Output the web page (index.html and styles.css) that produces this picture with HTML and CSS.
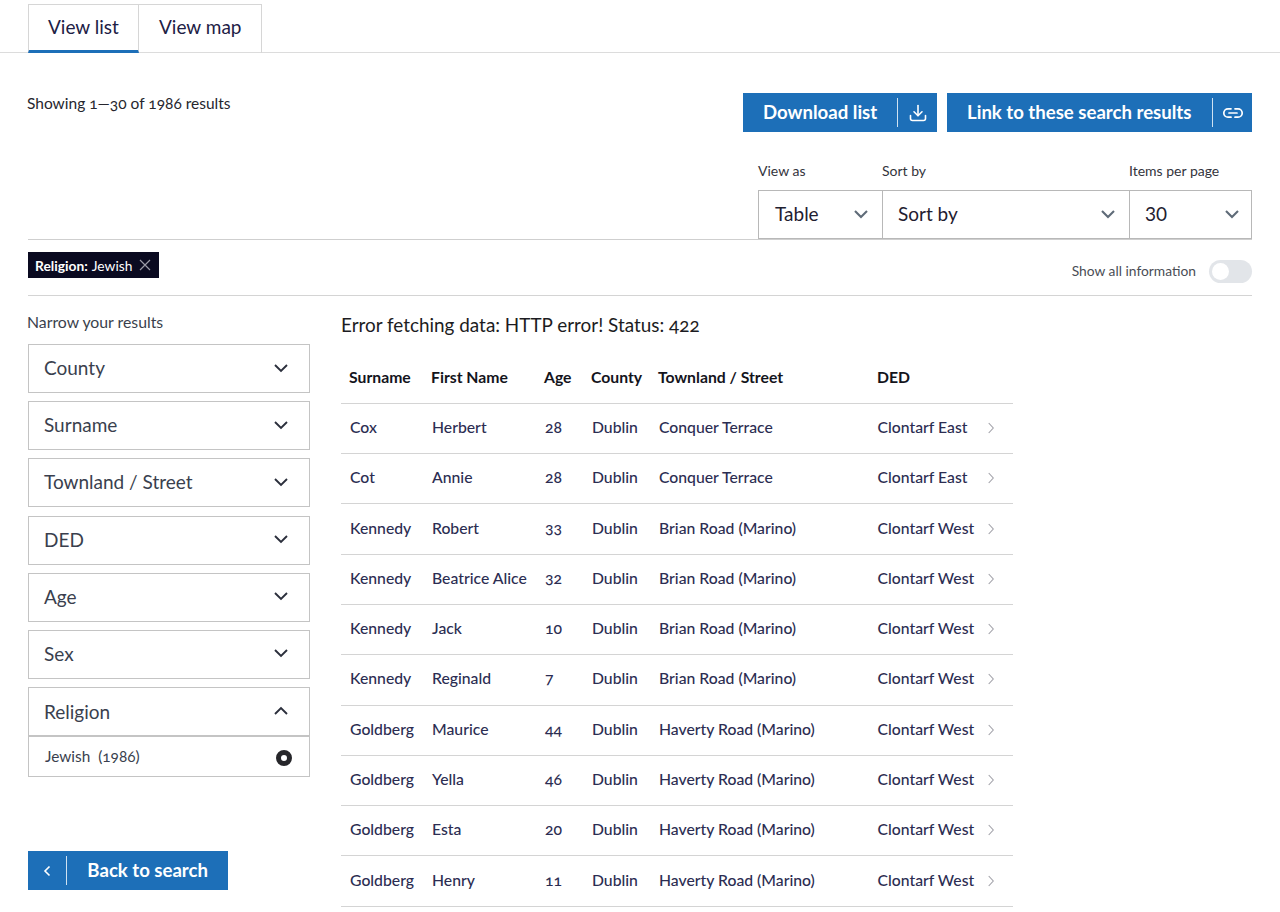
FILE: index.html
```html
<!DOCTYPE html>
<html>
<head>
  <title>Search results</title>
  <link rel="stylesheet" href="styles.css">
</head>
<body>

  <nav class="tabs">
    <a class="tab active">View list</a>
    <a class="tab">View map</a>
  </nav>

  <div class="page">
    <div class="toolbar">
      <p class="showing">Showing 1—30 of 1986 results</p>
      <div class="toolbar-right">
        <div class="actions">
          <a class="btn download">
            <span class="btn-label">Download list</span>
            <span class="btn-icon">
              <svg width="20" height="20" viewBox="0 0 20 20" fill="none" stroke="#fff" stroke-width="1.6" stroke-linecap="round" stroke-linejoin="round"><path d="M10 2.5v10"/><path d="M6 8.8l4 3.9 4-3.9"/><path d="M2.5 12.5v3a2 2 0 0 0 2 2h11a2 2 0 0 0 2-2v-3"/></svg>
            </span>
          </a>
          <a class="btn link-results">
            <span class="btn-label">Link to these search results</span>
            <span class="btn-icon">
              <svg width="22" height="20" viewBox="0 0 22 20" fill="none" stroke="#fff" stroke-width="1.7" stroke-linecap="round"><path d="M9 5.8H6a4.2 4.2 0 0 0 0 8.4h3"/><path d="M13 5.8h3a4.2 4.2 0 0 1 0 8.4h-3"/><path d="M7 10h8"/></svg>
            </span>
          </a>
        </div>
        <div class="selects">
          <div class="select-group view-as">
            <label>View as</label>
            <div class="select">Table <svg class="chev grey" viewBox="0 0 16 10"><path d="M2 2l6 6 6-6"/></svg></div>
          </div>
          <div class="select-group sort-by">
            <label>Sort by</label>
            <div class="select">Sort by <svg class="chev grey" viewBox="0 0 16 10"><path d="M2 2l6 6 6-6"/></svg></div>
          </div>
          <div class="select-group per-page">
            <label>Items per page</label>
            <div class="select">30 <svg class="chev grey" viewBox="0 0 16 10"><path d="M2 2l6 6 6-6"/></svg></div>
          </div>
        </div>
      </div>
    </div>

    <div class="chips-bar">
      <span class="chip"><b>Religion:</b> Jewish
        <svg width="12" height="12" viewBox="0 0 12 12" fill="none" stroke="#9a9aa6" stroke-width="1.2"><path d="M1 1l10 10M11 1L1 11"/></svg>
      </span>
      <div class="show-all">
        <span>Show all information</span>
        <span class="toggle"><span class="knob"></span></span>
      </div>
    </div>

    <div class="content">
      <aside class="sidebar">
        <p class="narrow">Narrow your results</p>
        <div class="filter">County <svg class="chev" viewBox="0 0 16 10"><path d="M2 2l6 6 6-6"/></svg></div>
        <div class="filter">Surname <svg class="chev" viewBox="0 0 16 10"><path d="M2 2l6 6 6-6"/></svg></div>
        <div class="filter">Townland / Street <svg class="chev" viewBox="0 0 16 10"><path d="M2 2l6 6 6-6"/></svg></div>
        <div class="filter">DED <svg class="chev" viewBox="0 0 16 10"><path d="M2 2l6 6 6-6"/></svg></div>
        <div class="filter">Age <svg class="chev" viewBox="0 0 16 10"><path d="M2 2l6 6 6-6"/></svg></div>
        <div class="filter">Sex <svg class="chev" viewBox="0 0 16 10"><path d="M2 2l6 6 6-6"/></svg></div>
        <div class="filter open">
          <div class="filter-head">Religion <svg class="chev" viewBox="0 0 16 10"><path d="M2 8l6-6 6 6"/></svg></div>
          <div class="filter-option"><span>Jewish&nbsp; (1986)</span><span class="radio"></span></div>
        </div>
        <a class="btn back">
          <span class="back-icon">
            <svg width="8" height="12" viewBox="0 0 8 12" fill="none" stroke="#fff" stroke-width="1.6"><path d="M6.5 1.5L2 6l4.5 4.5"/></svg>
          </span>
          <span class="btn-label">Back to search</span>
        </a>
      </aside>

      <main class="results">
        <p class="error">Error fetching data: HTTP error! Status: 422</p>
        <table class="results-table">
          <colgroup>
            <col class="c1"><col class="c2"><col class="c3"><col class="c4"><col class="c5"><col class="c6">
          </colgroup>
          <thead>
            <tr><th>Surname</th><th>First Name</th><th>Age</th><th>County</th><th>Townland / Street</th><th>DED</th></tr>
          </thead>
          <tbody id="rows"></tbody>
        </table>
      </main>
    </div>
  </div>

  <script>
    const people = [
      ["Cox", "Herbert", 28, "Conquer Terrace", "Clontarf East"],
      ["Cot", "Annie", 28, "Conquer Terrace", "Clontarf East"],
      ["Kennedy", "Robert", 33, "Brian Road (Marino)", "Clontarf West"],
      ["Kennedy", "Beatrice Alice", 32, "Brian Road (Marino)", "Clontarf West"],
      ["Kennedy", "Jack", 10, "Brian Road (Marino)", "Clontarf West"],
      ["Kennedy", "Reginald", 7, "Brian Road (Marino)", "Clontarf West"],
      ["Goldberg", "Maurice", 44, "Haverty Road (Marino)", "Clontarf West"],
      ["Goldberg", "Yella", 46, "Haverty Road (Marino)", "Clontarf West"],
      ["Goldberg", "Esta", 20, "Haverty Road (Marino)", "Clontarf West"],
      ["Goldberg", "Henry", 11, "Haverty Road (Marino)", "Clontarf West"]
    ];

    const arrow = '<svg width="6" height="12" viewBox="0 0 6 12" fill="none" stroke="#a0a0a8" stroke-width="1.1"><path d="M.7 1l4.6 5-4.6 5"/></svg>';

    document.getElementById("rows").innerHTML = people.map(p =>
      `<tr><td>${p[0]}</td><td>${p[1]}</td><td>${p[2]}</td><td>Dublin</td><td>${p[3]}</td><td><div class="ded-cell"><span>${p[4]}</span>${arrow}</div></td></tr>`
    ).join("");
  </script>

</body>
</html>
```

FILE: styles.css
```css
* {
  box-sizing: border-box;
}
body {
  margin: 0;
  font-family: Lato, "Open Sans", sans-serif;
  font-variant-numeric: oldstyle-nums;
  color: #1f2030;
  background: #fff;
}
p {
  margin: 0;
}

/* tabs */
.tabs {
  display: flex;
  height: 53px;
  padding: 4px 0 0 28px;
  border-bottom: 1px solid #dcdcdc;
}
.tab {
  height: 49px;
  padding: 10px 20px 0 20px;
  font-size: 19px;
  line-height: 24px;
  color: #1d2045;
  white-space: nowrap;
  border: 1px solid #d6d6d6;
  border-bottom: none;
}
.tab + .tab {
  border-left: none;
}
.tab.active {
  width: 111px;
  padding-left: 19px;
  border-bottom: 3px solid #1d6fb8;
}

.page {
  padding: 0 28px;
}

/* top toolbar */
.toolbar {
  display: flex;
  justify-content: space-between;
  height: 187px;
  border-bottom: 1px solid #cfcfcf;
}
.showing {
  margin-top: 40px;
  margin-left: -1px;
  font-size: 15.5px;
  line-height: 20px;
  color: #26262e;
}
.toolbar-right {
  display: flex;
  flex-direction: column;
  align-items: flex-end;
  padding-top: 40px;
}
.actions {
  display: flex;
  gap: 10px;
}
.btn {
  display: flex;
  align-items: center;
  height: 39px;
  background: #1d6fb8;
  color: #fff;
  font-size: 18.6px;
  font-weight: 700;
  white-space: nowrap;
}
.btn.download {
  width: 194px;
}
.btn.link-results {
  width: 305px;
}
.btn-label {
  padding: 0 20px 2px;
}
.btn-icon {
  display: flex;
  align-items: center;
  justify-content: center;
  width: 40px;
  height: 29px;
  margin-left: auto;
  border-left: 1px solid #cfe2f2;
}
.selects {
  display: flex;
  margin-top: 29px;
}
.select-group label {
  display: block;
  height: 29px;
  font-size: 14px;
  line-height: 20px;
  color: #33343c;
}
.view-as {
  width: 124px;
}
.sort-by {
  width: 247px;
}
.per-page {
  width: 123px;
}
.select {
  display: flex;
  align-items: center;
  justify-content: space-between;
  height: 49px;
  padding: 0 13px 2px 16px;
  font-size: 19px;
  font-variant-numeric: lining-nums;
  color: #1f2030;
  border: 1px solid #b8b8b8;
  margin-right: -1px;
}
.sort-by .select {
  padding-left: 15px;
}
.per-page .select {
  margin-right: 0;
  padding-left: 15px;
  padding-right: 11px;
}
.chev {
  width: 16px;
  height: 10px;
  fill: none;
  stroke: #2b2f3c;
  stroke-width: 1.9;
}
.chev.grey {
  stroke: #5f6b78;
  stroke-width: 2.1;
}

/* chips */
.chips-bar {
  display: flex;
  justify-content: space-between;
  align-items: flex-start;
  height: 56px;
  border-bottom: 1px solid #d4d4d4;
}
.chip {
  display: flex;
  align-items: center;
  gap: 4px;
  height: 26px;
  margin-top: 12px;
  padding: 0 8px 0 7px;
  background: #0a0a20;
  color: #fff;
  font-size: 13.8px;
}
.chip svg {
  margin-left: 3px;
}
.show-all {
  display: flex;
  align-items: center;
  gap: 13px;
  margin-top: 20px;
  font-size: 13.8px;
  color: #4a4d55;
}
.show-all > span:first-child {
  padding-bottom: 3px;
}
.toggle {
  display: block;
  width: 43px;
  height: 23px;
  padding: 3px;
  border-radius: 12px;
  background: #e2e5e9;
}
.knob {
  display: block;
  width: 17px;
  height: 17px;
  border-radius: 50%;
  background: #fff;
}

/* two columns */
.content {
  display: flex;
  gap: 31px;
}
.sidebar {
  width: 282px;
  flex: none;
}
.narrow {
  margin-top: 16px;
  margin-bottom: 12px;
  margin-left: -1px;
  font-size: 15.8px;
  line-height: 20px;
  color: #3a3f4c;
}
.filter {
  display: flex;
  align-items: center;
  justify-content: space-between;
  height: 49px;
  margin-bottom: 8.2px;
  padding: 0 20px 2px 15px;
  font-size: 19px;
  color: #3a3f4e;
  border: 1px solid #c4c4c4;
}
.filter.open {
  display: block;
  height: 90px;
  padding: 0;
  margin-bottom: 0;
}
.filter-head {
  display: flex;
  align-items: center;
  justify-content: space-between;
  height: 49px;
  padding: 0 20px 1px 15px;
  border-bottom: 2px solid #c4c4c4;
}
.filter-option {
  display: flex;
  align-items: center;
  justify-content: space-between;
  height: 39px;
  padding: 0 17px 0 16px;
  font-size: 15.4px;
  color: #3a3f4e;
}
.filter-option > span:first-child {
  padding-bottom: 2px;
}
.radio {
  width: 16px;
  height: 16px;
  margin-top: 2px;
  border: 5px solid #26262a;
  border-radius: 50%;
  background: #fff;
}
.btn.back {
  width: 200px;
  margin-top: 74px;
}
.back-icon {
  display: flex;
  align-items: center;
  justify-content: center;
  width: 40px;
  height: 29px;
  border-right: 1px solid #cfe2f2;
}

/* results table */
.error {
  margin-top: 17px;
  font-size: 18.9px;
  line-height: 24px;
  color: #1c1c22;
}
.results-table {
  margin-top: 13px;
  width: 672px;
  table-layout: fixed;
  border-collapse: collapse;
}
.c1 { width: 82px; }
.c2 { width: 113px; }
.c3 { width: 47px; }
.c4 { width: 67px; }
.c5 { width: 219px; }
.c6 { width: 144px; }
.results-table th {
  height: 53.3px;
  padding: 0 0 0 8px;
  text-align: left;
  font-size: 15.75px;
  font-weight: 700;
  color: #14141c;
  border-bottom: 1px solid #d4d4d4;
}
.results-table td {
  height: 50.3px;
  padding: 0 0 4px 9px;
  font-size: 15.75px;
  font-weight: 500;
  color: #2c2d52;
  border-bottom: 1px solid #d4d4d4;
  white-space: nowrap;
}
.results-table td:last-child {
  padding-left: 8.5px;
}
.ded-cell {
  display: flex;
  align-items: center;
  justify-content: space-between;
  padding-right: 19px;
}
.ded-cell svg {
  margin-top: 3px;
}
```
